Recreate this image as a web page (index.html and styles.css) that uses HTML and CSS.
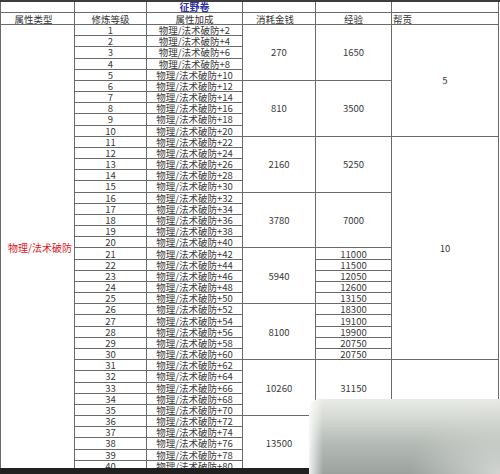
FILE: index.html
```html
<!DOCTYPE html>
<html lang="zh">
<head>
<meta charset="utf-8">
<link rel="stylesheet" href="styles.css">
</head>
<body>
<div class="topbar"></div>
<div class="sheet">
  <div class="c"></div><div class="c"></div><div class="c title">征野卷</div><div class="c"></div><div class="c"></div><div class="c"></div>
  <div class="c h h1">属性类型</div><div class="c h">修炼等级</div><div class="c h">属性加成</div><div class="c h h4">消耗金钱</div><div class="c h">经验</div><div class="c h h6">帮贡</div>

  <div class="c r40 type">物理/法术破防</div><div class="c">1</div><div class="c">物理/法术破防+2</div><div class="c r5">270</div><div class="c r5">1650</div><div class="c r10">5</div>
  <div class="c">2</div><div class="c">物理/法术破防+4</div>
  <div class="c">3</div><div class="c">物理/法术破防+6</div>
  <div class="c">4</div><div class="c">物理/法术破防+8</div>
  <div class="c">5</div><div class="c">物理/法术破防+10</div>

  <div class="c">6</div><div class="c">物理/法术破防+12</div><div class="c r5">810</div><div class="c r5">3500</div>
  <div class="c">7</div><div class="c">物理/法术破防+14</div>
  <div class="c">8</div><div class="c">物理/法术破防+16</div>
  <div class="c">9</div><div class="c">物理/法术破防+18</div>
  <div class="c">10</div><div class="c">物理/法术破防+20</div>

  <div class="c">11</div><div class="c">物理/法术破防+22</div><div class="c r5">2160</div><div class="c r5">5250</div><div class="c r20">10</div>
  <div class="c">12</div><div class="c">物理/法术破防+24</div>
  <div class="c">13</div><div class="c">物理/法术破防+26</div>
  <div class="c">14</div><div class="c">物理/法术破防+28</div>
  <div class="c">15</div><div class="c">物理/法术破防+30</div>

  <div class="c">16</div><div class="c">物理/法术破防+32</div><div class="c r5">3780</div><div class="c r5">7000</div>
  <div class="c">17</div><div class="c">物理/法术破防+34</div>
  <div class="c">18</div><div class="c">物理/法术破防+36</div>
  <div class="c">19</div><div class="c">物理/法术破防+38</div>
  <div class="c">20</div><div class="c">物理/法术破防+40</div>

  <div class="c">21</div><div class="c">物理/法术破防+42</div><div class="c r5">5940</div><div class="c">11000</div>
  <div class="c">22</div><div class="c">物理/法术破防+44</div><div class="c">11500</div>
  <div class="c">23</div><div class="c">物理/法术破防+46</div><div class="c">12050</div>
  <div class="c">24</div><div class="c">物理/法术破防+48</div><div class="c">12600</div>
  <div class="c">25</div><div class="c">物理/法术破防+50</div><div class="c">13150</div>

  <div class="c">26</div><div class="c">物理/法术破防+52</div><div class="c r5">8100</div><div class="c">18300</div>
  <div class="c">27</div><div class="c">物理/法术破防+54</div><div class="c">19100</div>
  <div class="c">28</div><div class="c">物理/法术破防+56</div><div class="c">19900</div>
  <div class="c">29</div><div class="c">物理/法术破防+58</div><div class="c">20750</div>
  <div class="c">30</div><div class="c">物理/法术破防+60</div><div class="c">20750</div>

  <div class="c">31</div><div class="c">物理/法术破防+62</div><div class="c r5">10260</div><div class="c r5">31150</div><div class="c r5"></div>
  <div class="c">32</div><div class="c">物理/法术破防+64</div>
  <div class="c">33</div><div class="c">物理/法术破防+66</div>
  <div class="c">34</div><div class="c">物理/法术破防+68</div>
  <div class="c">35</div><div class="c">物理/法术破防+70</div>

  <div class="c">36</div><div class="c">物理/法术破防+72</div><div class="c r5">13500</div><div class="c r5"></div><div class="c r5"></div>
  <div class="c">37</div><div class="c">物理/法术破防+74</div>
  <div class="c">38</div><div class="c">物理/法术破防+76</div>
  <div class="c">39</div><div class="c">物理/法术破防+78</div>
  <div class="c">40</div><div class="c">物理/法术破防+80</div>
</div>
<div class="bottombar"></div>
<div class="blur"></div>
</body>
</html>
```
FILE: styles.css
```css
html, body {
  margin: 0;
  padding: 0;
  background: #ffffff;
}
body {
  width: 500px;
  height: 474px;
  overflow: hidden;
  position: relative;
  font-family: "Noto Sans CJK SC", "Liberation Sans", sans-serif;
  font-size: 9.5px;
  color: #3a3a3a;
}
.topbar {
  height: 2px;
  background: #3c3c3c;
}
.sheet {
  display: grid;
  width: 499px;
  box-sizing: border-box;
  padding: 0 1px 1px 1px;
  gap: 1px;
  background: #6a6a6a;
  grid-template-columns: 73px 71px 95px 72px 75px 106px;
  grid-template-rows: 10px 11px repeat(40, 10.18px);
}
.c {
  background: #ffffff;
  display: flex;
  align-items: center;
  justify-content: center;
  line-height: 10px;
  white-space: nowrap;
  overflow: hidden;
}
.title {
  color: #2f2fa0;
  font-weight: bold;
  font-size: 10px;
}
.h { color: #333333; }
.h1 { padding-right: 8px; }
.h4 { padding-right: 8px; }
.h6 { justify-content: flex-start; padding-left: 1px; }
.type {
  color: #e3141c;
  justify-content: flex-start;
  padding-left: 7px;
  font-size: 10px;
}
.r5 { grid-row: span 5; }
.r10 { grid-row: span 10; }
.r20 { grid-row: span 20; }
.r40 { grid-row: span 40; }
.bottombar {
  position: absolute;
  left: 0;
  right: 0;
  bottom: 0;
  height: 6px;
  background: #202020;
}
.blur {
  position: absolute;
  left: 309px;
  top: 399px;
  width: 191px;
  height: 75px;
  border-top-left-radius: 10px;
  background:
    linear-gradient(to right, rgba(255,255,255,0.85) 0px, rgba(255,255,255,0) 14px),
    radial-gradient(ellipse 90px 70px at 100% 100%, rgba(215,218,214,0.9), rgba(215,218,214,0) 100%),
    linear-gradient(to bottom, #e9ece6 0%, #d6dad4 25%, #b4bab5 60%, #9ca39f 100%);
}
```
